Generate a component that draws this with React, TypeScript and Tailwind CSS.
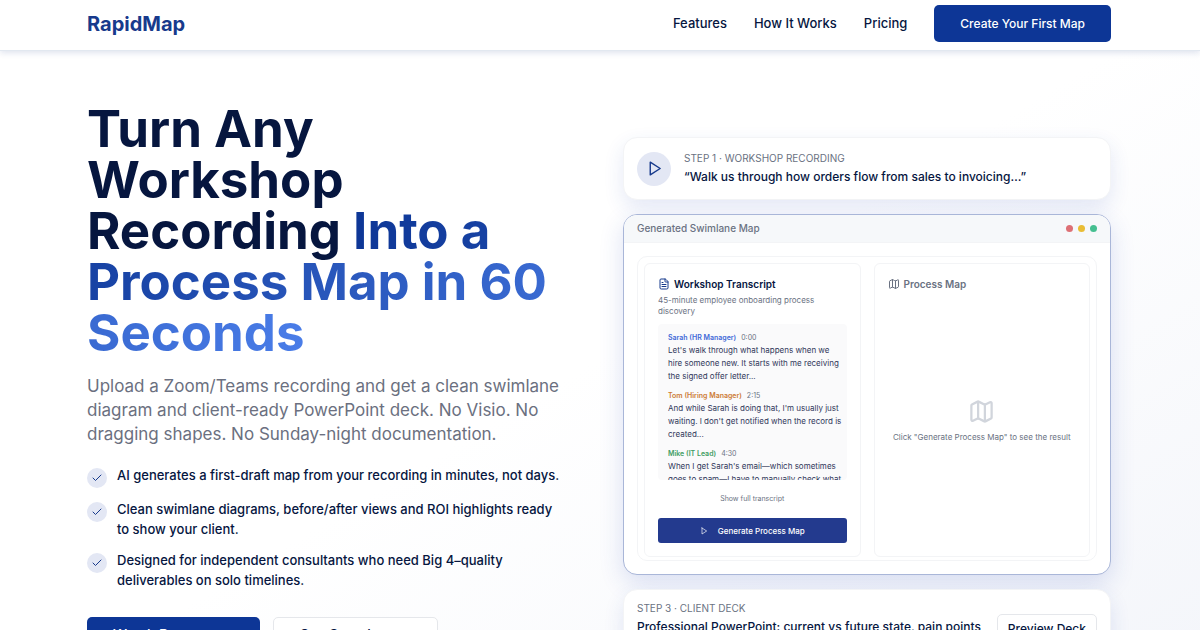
import React from 'react';
import { Check, FileText, Map } from 'lucide-react';

const navLinks = ['Features', 'How It Works', 'Pricing'];

const benefits = [
  'AI generates a first-draft map from your recording in minutes, not days.',
  'Clean swimlane diagrams, before/after views and ROI highlights ready to show your client.',
  'Designed for independent consultants who need Big 4–quality deliverables on solo timelines.',
];

const transcript = [
  {
    speaker: 'Sarah (HR Manager)',
    time: '0:00',
    color: 'text-[#4169d8]',
    text: "Let's walk through what happens when we hire someone new. It starts with me receiving the signed offer letter...",
  },
  {
    speaker: 'Tom (Hiring Manager)',
    time: '2:15',
    color: 'text-[#cc7a35]',
    text: "And while Sarah is doing that, I'm usually just waiting. I don't get notified when the record is created...",
  },
  {
    speaker: 'Mike (IT Lead)',
    time: '4:30',
    color: 'text-[#3f9d63]',
    text: "When I get Sarah's email—which sometimes goes to spam—I have to manually check what",
  },
];

const PlayIcon: React.FC<{ className: string }> = ({ className }) => (
  <svg
    className={className}
    viewBox="0 0 24 24"
    fill="none"
    stroke="currentColor"
    strokeWidth="2"
    strokeLinecap="round"
    strokeLinejoin="round"
    aria-hidden="true"
  >
    <polygon points="6 3 20 12 6 21 6 3" />
  </svg>
);

const Header: React.FC = () => (
  <header className="relative z-10 border-b border-slate-200 bg-white shadow-[0_2px_6px_rgba(30,58,138,0.14)]">
    <div className="mx-auto flex h-[50px] max-w-7xl items-center justify-between pr-[89px] pb-[3px] pl-[87px]">
      <a href="#" className="text-xl font-bold text-[#173a8c]">
        RapidMap
      </a>
      <nav className="flex items-center gap-[27px] text-[13px] font-medium">
        {navLinks.map((link) => (
          <a key={link} href="#">
            {link}
          </a>
        ))}
        <button className="h-[37px] rounded-[5px] bg-[#0d3696] px-[26px] text-xs font-medium text-white">
          Create Your First Map
        </button>
      </nav>
    </div>
  </header>
);

const HeroCopy: React.FC = () => (
  <div className="pt-[52px]">
    <h1 className="text-[51px] leading-[51px] font-bold">
      Turn Any Workshop Recording{' '}
      <span className="bg-gradient-to-r from-[#0d3696] to-[#4a7de8] bg-clip-text text-transparent">
        Into a Process Map in 60 Seconds
      </span>
    </h1>
    <p className="mt-4 text-[17px] leading-6 text-[#6b7080]">
      Upload a Zoom/Teams recording and get a clean swimlane diagram and client-ready PowerPoint deck. No Visio. No
      dragging shapes. No Sunday-night documentation.
    </p>
    <ul className="mt-[19px] space-y-[11px]">
      {benefits.map((benefit) => (
        <li key={benefit} className="flex items-start gap-[10px] pr-[13px]">
          <span className="mt-[3px] flex size-5 shrink-0 items-center justify-center rounded-full bg-[#e3e7f4]">
            <Check className="size-3 text-[#173a8c]" />
          </span>
          <span className="text-[13px] leading-5 font-medium">{benefit}</span>
        </li>
      ))}
    </ul>
    <div className="mt-[27px] flex gap-[13px] text-sm font-medium">
      <button className="h-[35px] w-[173px] rounded-[5px] bg-[#0d3696] px-[26px] text-left text-white">
        Watch Demo
      </button>
      <button className="h-[35px] w-[165px] rounded-[5px] border border-gray-200 bg-white px-[26px] text-left">
        See Sample
      </button>
    </div>
  </div>
);

const TranscriptPanel: React.FC = () => (
  <div className="flex flex-col rounded-md border border-gray-100 bg-white px-[13px] pt-3 pb-[13px]">
    <h3 className="flex items-center gap-1 text-[10px] leading-4 font-semibold">
      <FileText className="size-3 text-[#173a8c]" />
      Workshop Transcript
    </h3>
    <p className="mt-[3px] text-[8px] leading-[11px] text-gray-500">45-minute employee onboarding process discovery</p>
    <div className="mt-[7px] h-[156px] overflow-hidden rounded bg-[#fafafb] pt-2 pr-1 pl-[10px]">
      {transcript.map((line) => (
        <div key={line.speaker} className="mb-[7px]">
          <p className="text-[7px] leading-3">
            <span className={`font-semibold ${line.color}`}>{line.speaker}</span>
            <span className="ml-[5px] text-gray-500">{line.time}</span>
          </p>
          <p className="text-[8px] leading-[13px] text-[#30375a]">{line.text}</p>
        </div>
      ))}
    </div>
    <button className="mt-[13px] text-[7px] leading-3 text-gray-500">Show full transcript</button>
    <button className="mt-[13px] flex h-[25px] items-center justify-center gap-[10px] rounded-[3px] bg-[#233a8e] text-[8px] font-medium text-white">
      <PlayIcon className="size-2" />
      Generate Process Map
    </button>
  </div>
);

const ProcessPanel: React.FC = () => (
  <div className="flex flex-col rounded-md border border-gray-100 bg-white px-[13px] pt-3 pb-[13px]">
    <h3 className="flex items-center gap-1 text-[10px] leading-4 font-semibold text-gray-500">
      <Map className="size-3" />
      Process Map
    </h3>
    <div className="flex grow flex-col items-center justify-center pt-[6px]">
      <Map className="size-[27px] text-gray-300" />
      <p className="mt-[6px] text-[8px] leading-3 text-gray-500">Click "Generate Process Map" to see the result</p>
    </div>
  </div>
);

const HeroDemo: React.FC = () => (
  <div className="space-y-[14px] pt-[86px]">
    <section className="flex items-center gap-[13px] rounded-[14px] border border-gray-100 bg-white px-[13px] py-3 shadow-[0_8px_20px_rgba(40,70,180,0.12)]">
      <span className="flex size-[34px] items-center justify-center rounded-full bg-[#e3e7f4]">
        <PlayIcon className="size-[17px] text-[#173a8c]" />
      </span>
      <div>
        <p className="text-[10px] leading-[17px] text-gray-500">STEP 1 · WORKSHOP RECORDING</p>
        <p className="text-xs leading-5 font-medium">“Walk us through how orders flow from sales to invoicing…”</p>
      </div>
    </section>

    <section className="overflow-hidden rounded-[14px] border border-[#a9b6d8] bg-white shadow-[0_8px_24px_rgba(40,70,180,0.16)]">
      <div className="flex h-7 items-center justify-between border-b border-gray-100 bg-[#f6f8fa] px-[13px]">
        <h2 className="text-[10px] font-medium text-gray-500">Generated Swimlane Map</h2>
        <div className="flex gap-[5px]">
          <span className="size-[7px] rounded-full bg-[#dd7075]" />
          <span className="size-[7px] rounded-full bg-[#e9bd35]" />
          <span className="size-[7px] rounded-full bg-[#45bf90]" />
        </div>
      </div>
      <div className="p-[13px]">
        <div className="grid grid-cols-2 gap-[13px] rounded-[10px] border border-gray-100 px-[6px] pt-[6px] pb-[3px]">
          <TranscriptPanel />
          <ProcessPanel />
        </div>
      </div>
    </section>

    <section className="flex items-center justify-between gap-[13px] rounded-[14px] border border-gray-100 bg-white px-[13px] py-[10px] shadow-[0_8px_20px_rgba(40,70,180,0.12)]">
      <div>
        <p className="text-[10px] leading-[17px] text-gray-500">STEP 3 · CLIENT DECK</p>
        <p className="text-xs leading-5 font-medium">
          Professional PowerPoint: current vs future state, pain points and ROI.
        </p>
      </div>
      <button className="h-[30px] shrink-0 rounded-[5px] border border-gray-200 px-[10px] text-xs font-medium">
        Preview Deck
      </button>
    </section>
  </div>
);

export default function App() {
  return (
    <div className="min-h-screen bg-gradient-to-br from-white from-50% to-[#f3f5fa] font-['Inter',sans-serif] text-[#06163f]">
      <Header />
      <main className="mx-auto grid max-w-7xl grid-cols-2 gap-12 pr-[89px] pb-12 pl-[87px]">
        <HeroCopy />
        <HeroDemo />
      </main>
    </div>
  );
}
